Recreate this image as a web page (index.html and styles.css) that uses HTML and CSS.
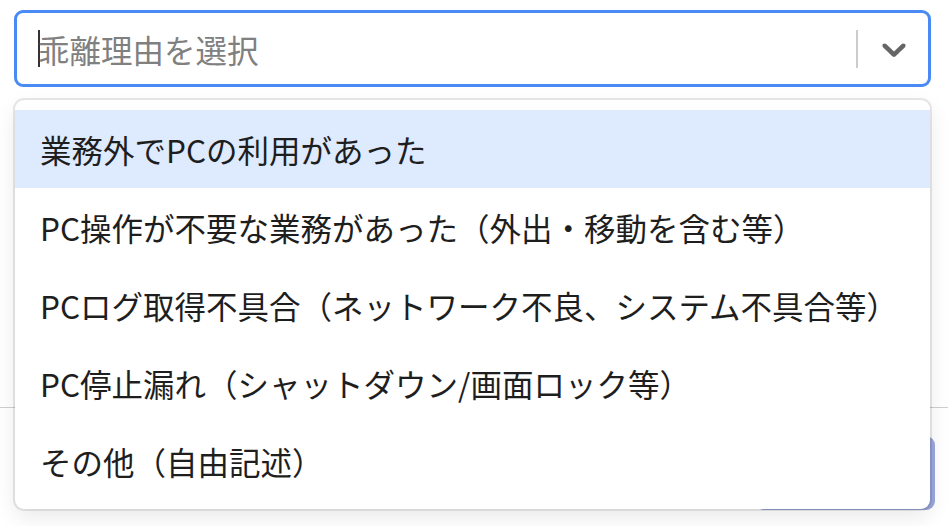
FILE: index.html
```html
<!DOCTYPE html>
<html lang="ja">
<head>
<meta charset="utf-8">
<title>乖離理由</title>
<link rel="stylesheet" href="styles.css">
</head>
<body>
<div class="page">
  <div class="field">
    <div class="control">
      <div class="value">
        <span class="caret"></span><span class="placeholder">乖離理由を選択</span>
      </div>
      <span class="sep"></span>
      <div class="indicator">
        <svg width="40" height="40" viewBox="0 0 20 20" aria-hidden="true"><path fill="#666" d="M4.516 7.548c0.436-0.446 1.043-0.481 1.576 0l3.908 3.747 3.908-3.747c0.533-0.481 1.141-0.446 1.574 0 0.436 0.445 0.408 1.197 0 1.615-0.406 0.418-4.695 4.502-4.695 4.502-0.217 0.223-0.502 0.335-0.787 0.335s-0.57-0.112-0.789-0.335c0 0-4.287-4.084-4.695-4.502s-0.436-1.170 0-1.615z"/></svg>
      </div>
    </div>
  </div>
  <div class="body"></div>
  <div class="footer">
    <button class="btn" type="button">登録</button>
  </div>

  <div class="menu">
    <div class="option focused">業務外でPCの利用があった</div>
    <div class="option">PC操作が不要な業務があった（外出・移動を含む等）</div>
    <div class="option">PCログ取得不具合（ネットワーク不良、システム不具合等）</div>
    <div class="option">PC停止漏れ（シャットダウン/画面ロック等）</div>
    <div class="option">その他（自由記述）</div>
  </div>
</div>
</body>
</html>
```

FILE: styles.css
```css
* { box-sizing: border-box; }
html, body {
  margin: 0;
  padding: 0;
  background: #ffffff;
}
body {
  font-family: "Noto Sans CJK JP", "Noto Sans", sans-serif;
  color: #222222;
  width: 948px;
  height: 526px;
  overflow: hidden;
}
.page {
  position: relative;
  width: 948px;
  height: 526px;
}
.field {
  padding: 10px 17px 0 14px;
}
.control {
  height: 77px;
  border: 3px solid #4a8af4;
  border-radius: 9px;
  background: #fff;
  display: flex;
  align-items: center;
}
.value {
  flex: 1;
  display: flex;
  align-items: center;
  padding-left: 21px;
  font-size: 31.5px;
  line-height: 40px;
}
.caret {
  width: 2px;
  height: 37px;
  background: #333;
  margin-right: -2px;
}
.placeholder {
  color: #808080;
}
.sep {
  width: 2px;
  height: 38px;
  background: #cccccc;
  margin-left: -2px;
}
.indicator {
  display: flex;
  align-items: center;
  padding: 0 14px 0 16px;
}
.indicator svg { display: block; }

.body {
  height: 320px;
}
.footer {
  border-top: 1px solid #cfcfcf;
  display: flex;
  justify-content: flex-end;
  padding: 28px 13px 0 0;
}
.btn {
  width: 180px;
  height: 74px;
  border: none;
  border-radius: 9px;
  background: #9ba7dc;
  color: #fff;
  font-family: inherit;
  font-size: 28px;
}

.menu {
  position: absolute;
  top: 100px;
  left: 15px;
  width: 915px;
  background: #fff;
  border-radius: 9px;
  box-shadow: 0 0 0 2px rgba(0, 0, 0, 0.09), 0 8px 22px rgba(0, 0, 0, 0.09);
  padding: 10px 0 9px;
}
.option {
  height: 78px;
  display: flex;
  align-items: center;
  padding-left: 25px;
  font-size: 31.5px;
  color: #1e1e1e;
  white-space: nowrap;
}
.option.focused {
  background: #deebff;
}
```
